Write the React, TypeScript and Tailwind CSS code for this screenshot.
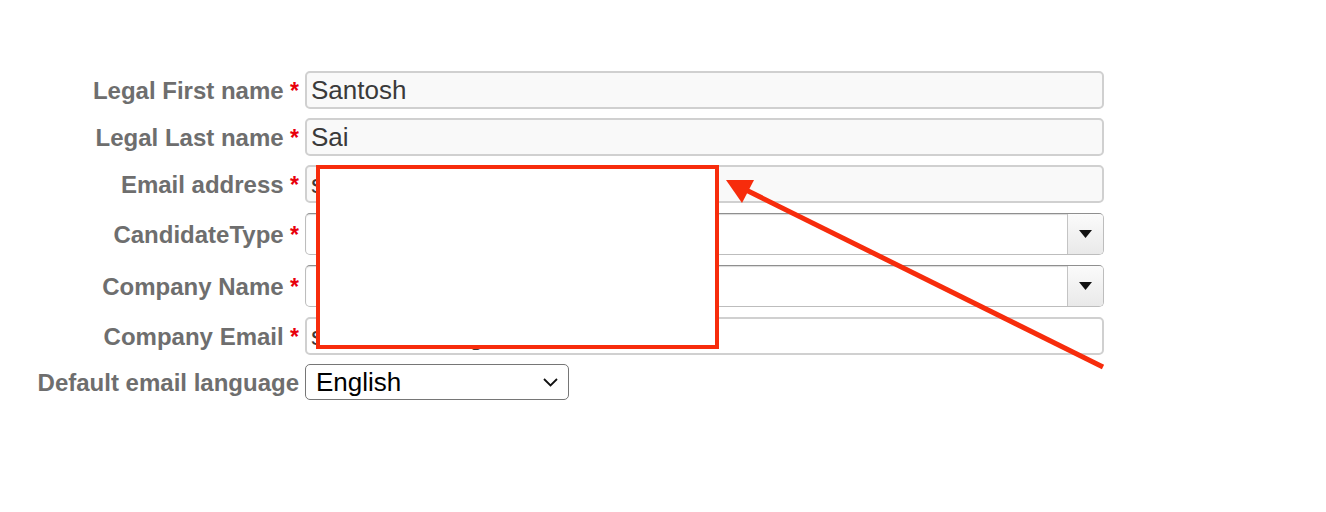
import React from "react";

const labelCls =
  "text-right pr-[6px] pt-[2px] text-[24px] font-bold text-[#6e6e6e] leading-none whitespace-nowrap";

function Req() {
  return <span className="text-[#e8000b] text-[23px]"> *</span>;
}

function TextField({ value, bg = "bg-[#f9f9f9]" }: { value: string; bg?: string }) {
  return (
    <div
      className={`h-[38px] w-[799px] rounded-[5px] border-2 border-[#d0d0d0] ${bg} flex items-center pl-[4px] pt-[1px] text-[26px] text-[#3a3a3a] overflow-hidden whitespace-nowrap`}
    >
      {value}
    </div>
  );
}

function ComboField() {
  return (
    <div className="h-[42px] w-[799px] flex rounded-[5px] border border-[#bdbdbd] border-t-[#8f8f8f] bg-white shadow-[inset_0_1px_1px_rgba(0,0,0,0.15)] overflow-hidden">
      <div className="flex-1" />
      <div className="w-[36px] h-full border-l border-[#c4c4c4] bg-gradient-to-b from-[#fbfbfb] to-[#e9e9e9] flex items-center justify-center">
        <svg width="13" height="8" viewBox="0 0 13 8">
          <polygon points="0,0 13,0 6.5,8" fill="#111" />
        </svg>
      </div>
    </div>
  );
}

export default function App() {
  return (
    <div
      className="relative w-[1326px] h-[512px] bg-white overflow-hidden"
      style={{ fontFamily: '"Liberation Sans", Arial, sans-serif' }}
    >
      <div className="pt-[71px] pl-[5px]">
        <div className="grid grid-cols-[300px_799px] items-center">
          <div className={labelCls}>Legal First name<Req /></div>
          <TextField value="Santosh" />
          <div className="col-span-2 h-[9px]" />
          <div className={labelCls}>Legal Last name<Req /></div>
          <TextField value="Sai" />
          <div className="col-span-2 h-[9px]" />
          <div className={labelCls}>Email address<Req /></div>
          <TextField value="santosh.sai@gmail.com" />
          <div className="col-span-2 h-[10px]" />
          <div className={labelCls}>CandidateType<Req /></div>
          <ComboField />
          <div className="col-span-2 h-[10px]" />
          <div className={labelCls}>Company Name<Req /></div>
          <ComboField />
          <div className="col-span-2 h-[10px]" />
          <div className={labelCls}>Company Email<Req /></div>
          <TextField value="santosh.sai@gmail.com" bg="bg-white" />
          <div className="col-span-2 h-[9px]" />
          <div className={labelCls}>Default email language</div>
          <div className="h-[36px] w-[264px] rounded-[5px] border-[1.5px] border-[#767676] bg-white flex items-center justify-between pl-[10px] pr-[10px] text-[26px] text-black">
            <span>English</span>
            <svg width="15" height="9" viewBox="0 0 15 9" fill="none">
              <polyline points="1,1 7.5,7.5 14,1" stroke="#111" strokeWidth="1.8" />
            </svg>
          </div>
        </div>
      </div>

      {/* annotation overlay */}
      <div className="absolute left-[316px] top-[165px] w-[403px] h-[184px] border-[4px] border-[#f72c0c] bg-white" />
      <svg
        className="absolute left-0 top-0 pointer-events-none"
        width="1326"
        height="512"
        viewBox="0 0 1326 512"
      >
        <line x1="1103" y1="367" x2="742" y2="188" stroke="#f72c0c" strokeWidth="5" />
        <polygon points="726,180 754,180 742,203" fill="#f72c0c" />
      </svg>
    </div>
  );
}
